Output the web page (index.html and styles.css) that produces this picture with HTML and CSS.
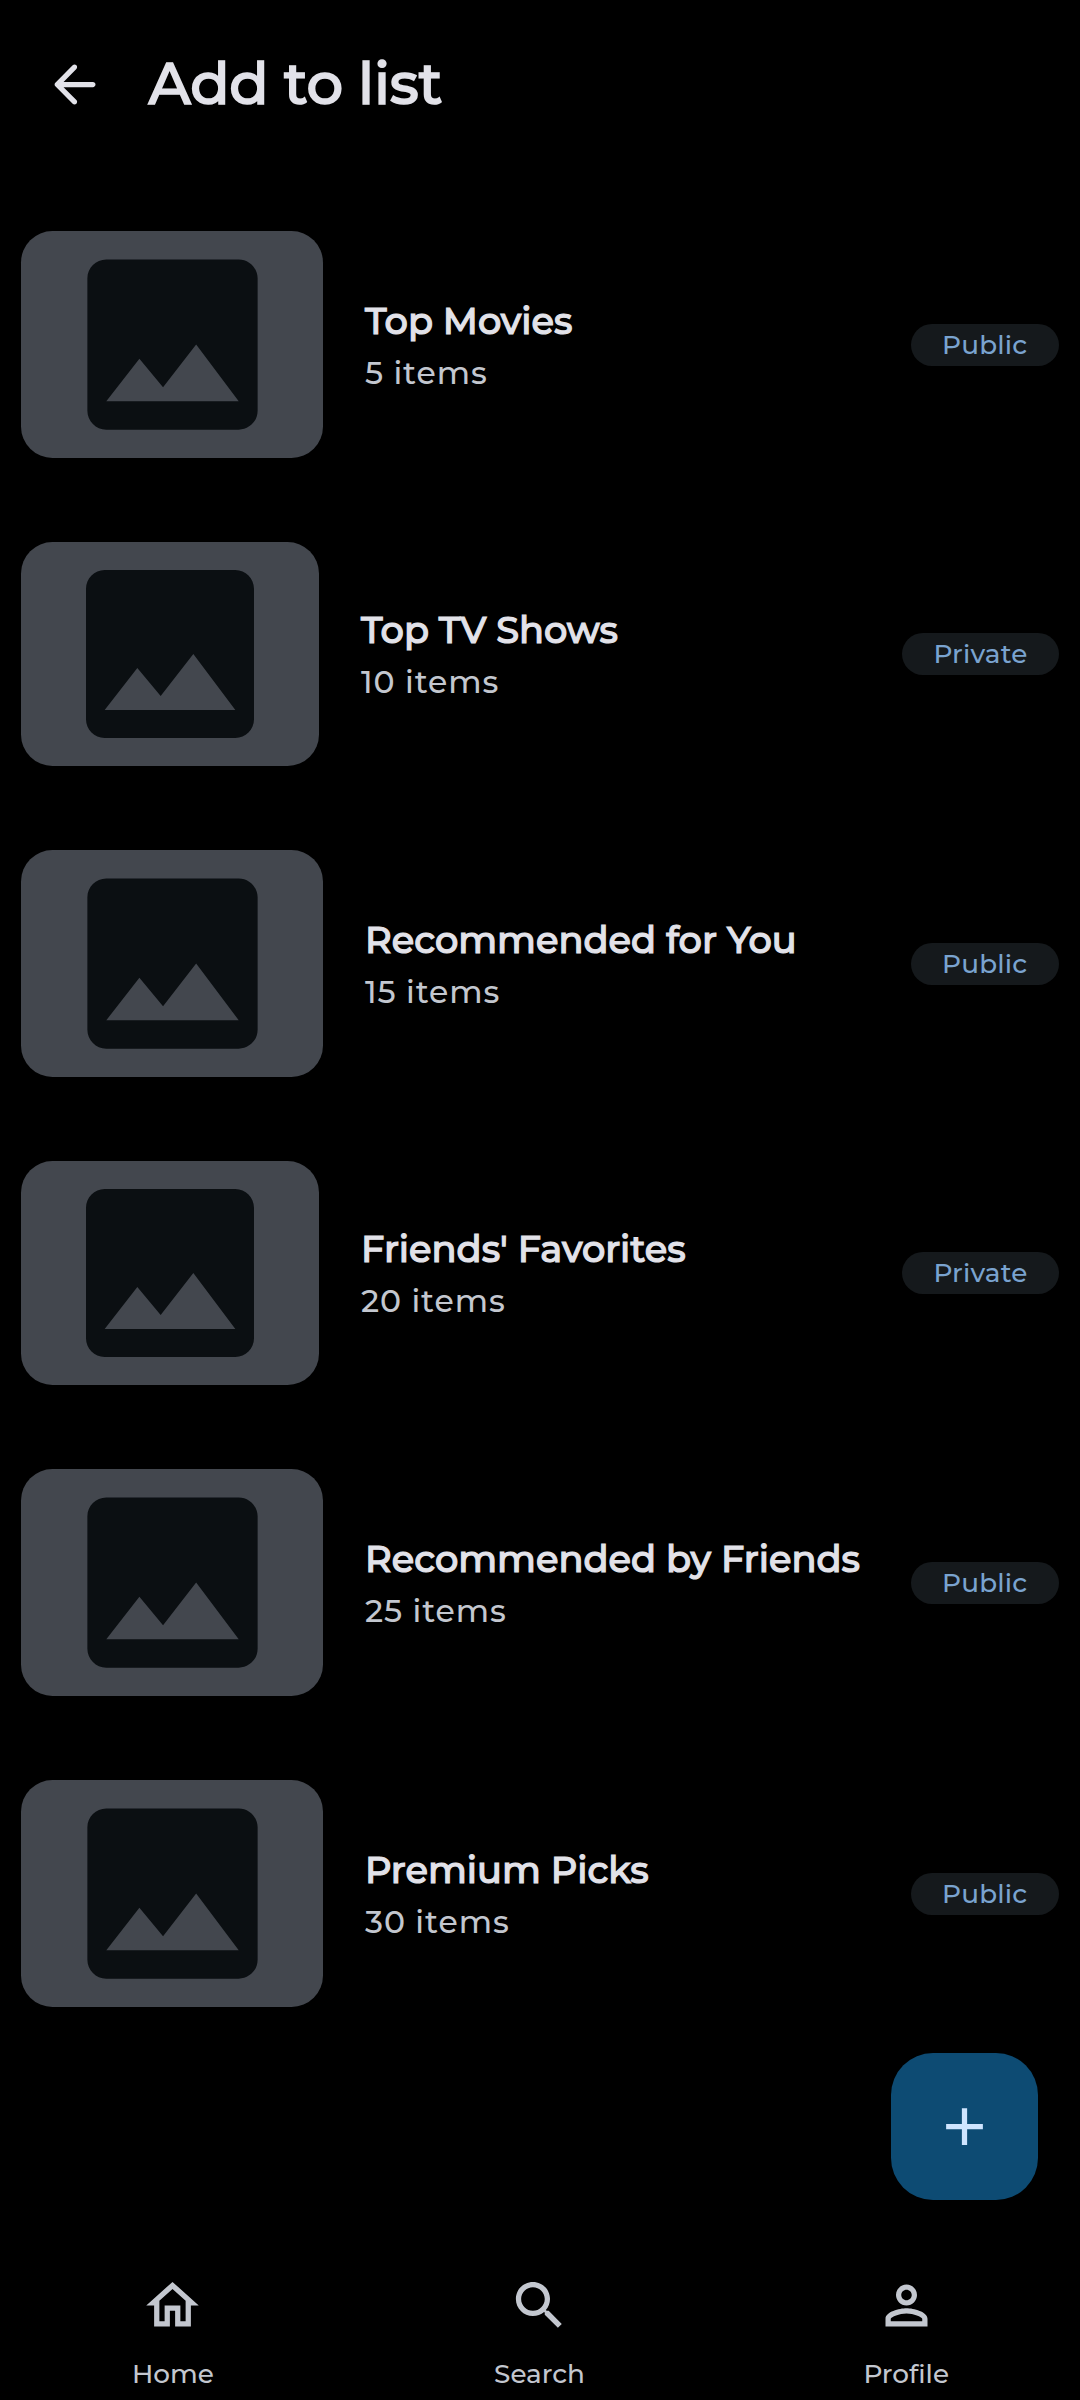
FILE: index.html
```html
<!DOCTYPE html>
<html lang="en">
<head>
<meta charset="utf-8">
<title>Add to list</title>
<link rel="stylesheet" href="styles.css">
</head>
<body>
<svg width="0" height="0" class="defs">
  <symbol id="image" viewBox="0 0 24 24"><path class="frame" d="M19 3H5c-1.1 0-2 .9-2 2v14c0 1.100.9 2 2 2h14c1.100 0 2-.9 2-2V5c0-1.100-.9-2-2-2zM5 18l3.500-4.500 2.500 3.010L14.500 12l4.500 6z"/></symbol>
</svg>
<div class="screen">
  <header class="top-bar">
    <svg class="icon" viewBox="0 0 24 24"><path d="M19 11H7.830l4.880-4.880c.39-.39.39-1.030 0-1.420-.39-.39-1.020-.39-1.410 0l-6.590 6.590c-.39.39-.39 1.020 0 1.410l6.590 6.590c.39.39 1.020.39 1.410 0 .39-.39.39-1.020 0-1.410L7.830 13H19c.55 0 1-.45 1-1s-.45-1-1-1z"/></svg>
    <h1 class="heading">Add to list</h1>
  </header>
  <main class="lists">
    <article class="row">
      <div class="thumb"><svg><use href="#image"/></svg></div>
      <div class="info"><h2 class="name">Top Movies</h2><p class="count">5 items</p></div>
      <span class="pill">Public</span>
    </article>
    <article class="row private">
      <div class="thumb"><svg><use href="#image"/></svg></div>
      <div class="info"><h2 class="name">Top TV Shows</h2><p class="count">10 items</p></div>
      <span class="pill">Private</span>
    </article>
    <article class="row">
      <div class="thumb"><svg><use href="#image"/></svg></div>
      <div class="info"><h2 class="name">Recommended for You</h2><p class="count">15 items</p></div>
      <span class="pill">Public</span>
    </article>
    <article class="row private">
      <div class="thumb"><svg><use href="#image"/></svg></div>
      <div class="info"><h2 class="name">Friends' Favorites</h2><p class="count">20 items</p></div>
      <span class="pill">Private</span>
    </article>
    <article class="row">
      <div class="thumb"><svg><use href="#image"/></svg></div>
      <div class="info"><h2 class="name">Recommended by Friends</h2><p class="count">25 items</p></div>
      <span class="pill">Public</span>
    </article>
    <article class="row">
      <div class="thumb"><svg><use href="#image"/></svg></div>
      <div class="info"><h2 class="name">Premium Picks</h2><p class="count">30 items</p></div>
      <span class="pill">Public</span>
    </article>
  </main>
  <button class="fab" aria-label="New list"><svg class="icon" viewBox="0 0 24 24"><path d="M19 13h-6v6h-2v-6H5v-2h6V5h2v6h6z"/></svg></button>
  <nav class="tabs">
    <a class="tab"><svg class="icon" viewBox="0 0 24 24"><path d="M12 5.690l5 4.500V18h-2v-6H9v6H7v-7.810l5-4.500M12 3L2 12h3v8h6v-6h2v6h6v-8h3L12 3z"/></svg><span class="label">Home</span></a>
    <a class="tab"><svg class="icon" viewBox="0 0 24 24"><path d="M15.500 14h-.79l-.28-.27C15.410 12.590 16 11.110 16 9.500 16 5.910 13.090 3 9.500 3S3 5.910 3 9.500 5.910 16 9.500 16c1.610 0 3.090-.59 4.230-1.570l.27.28v.79l5 4.990L20.490 19l-4.990-5zm-6 0C7.010 14 5 11.990 5 9.500S7.010 5 9.500 5 14 7.010 14 9.500 11.990 14 9.500 14z"/></svg><span class="label">Search</span></a>
    <a class="tab"><svg class="icon" viewBox="0 0 24 24"><path d="M12 6c1.100 0 2 .9 2 2s-.9 2-2 2-2-.9-2-2 .9-2 2-2m0 9c2.700 0 5.800 1.290 6 2v1H6v-.99c.2-.72 3.300-2.010 6-2.010m0-11C9.790 4 8 5.790 8 8s1.790 4 4 4 4-1.790 4-4-1.790-4-4-4zm0 9c-2.670 0-8 1.340-8 4v3h16v-3c0-2.660-5.330-4-8-4z"/></svg><span class="label">Profile</span></a>
  </nav>
</div>
</body>
</html>
```

FILE: styles.css
```css
* { box-sizing: border-box; margin: 0; padding: 0; }
body { background: #000; font-family: Montserrat, Inter, sans-serif; font-weight: 500; }
.defs { display: none; }
.screen { position: relative; display: flex; flex-direction: column; width: 1080px; height: 2400px; overflow: hidden; }
.icon { display: block; width: 63px; height: 63px; fill: currentColor; flex: none; }
.top-bar { display: flex; align-items: center; gap: 43px; height: 168px; padding-left: 42.5px; color: #e2e2e9; }
.heading { font-size: 57.75px; font-weight: 500; line-height: 70px; letter-spacing: -0.25px; padding-bottom: 2px; white-space: nowrap; -webkit-text-stroke: 1.6px currentColor; }
.lists { display: flex; flex-direction: column; gap: 84px; padding: 63px 21px 0; }
.row { display: flex; align-items: center; height: 227px; }
.row.private { height: 224px; }
.thumb { display: flex; justify-content: center; width: 302px; height: 100%; background: #43474e; border-radius: 31.5px; flex: none; }
.private .thumb { width: 298px; }
.thumb svg { height: 100%; width: 227px; }
.private .thumb svg { width: 224px; }
.frame { fill: #0b0f12; }
.info { flex: 1; padding-left: 42px; white-space: nowrap; }
.name { color: #e2e2e9; font-size: 36.75px; font-weight: 500; line-height: 56px; -webkit-text-stroke: 1.15px currentColor; padding-bottom: 1px; }
.count { color: #c3c7cf; font-size: 31.5px; line-height: 47px; letter-spacing: 0.95px; }
.pill { height: 42px; padding: 0 31.5px; line-height: 42px; border-radius: 21px; background: #15191c; color: #7aa3cf; font-size: 26.25px; letter-spacing: 0.2px; }
.fab { position: absolute; right: 42px; top: 2053px; display: flex; align-items: center; justify-content: center; width: 147px; height: 147px; border: 0; border-radius: 42px; background: #0d4b73; color: #cfe5ff; }
.tabs { display: flex; gap: 21px; margin-top: auto; height: 126px; padding-right: 1px; color: #c3c7cf; }
.tab { flex: 1; display: flex; flex-direction: column; align-items: center; gap: 19px; }
.label { font-size: 26.25px; line-height: 36px; }
```
